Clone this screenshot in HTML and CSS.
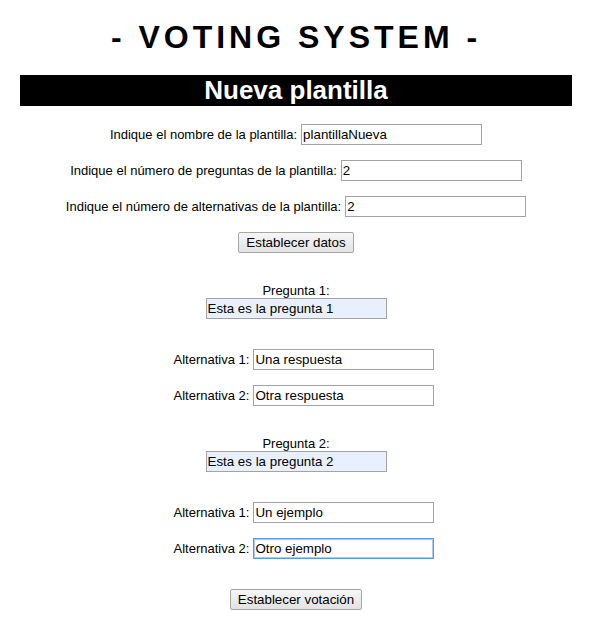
FILE: index.html
```html
<!DOCTYPE html>
<html lang="es">
<head>
<meta charset="utf-8">
<title>Voting System</title>
<link rel="stylesheet" href="styles.css">
</head>
<body>
<div class="page">
  <h1 class="title">- VOTING SYSTEM -</h1>
  <h2 class="bar">Nueva plantilla</h2>

  <form class="setup">
    <div class="row"><label>Indique el nombre de la plantilla:</label><input class="field" type="text" value="plantillaNueva"></div>
    <div class="row"><label>Indique el número de preguntas de la plantilla:</label><input class="field" type="text" value="2"></div>
    <div class="row"><label>Indique el número de alternativas de la plantilla:</label><input class="field" type="text" value="2"></div>
    <div class="row"><button type="button" class="btn">Establecer datos</button></div>
  </form>

  <div class="questions">
    <div class="question">
      <div class="q-head">
        <label>Pregunta 1:</label>
        <input class="field filled" type="text" value="Esta es la pregunta 1">
      </div>
      <div class="alts">
        <div class="row"><label>Alternativa 1:</label><input class="field" type="text" value="Una respuesta"></div>
        <div class="row"><label>Alternativa 2:</label><input class="field" type="text" value="Otra respuesta"></div>
      </div>
    </div>
    <div class="question">
      <div class="q-head">
        <label>Pregunta 2:</label>
        <input class="field filled" type="text" value="Esta es la pregunta 2">
      </div>
      <div class="alts">
        <div class="row"><label>Alternativa 1:</label><input class="field" type="text" value="Un ejemplo"></div>
        <div class="row"><label>Alternativa 2:</label><input class="field active" type="text" value="Otro ejemplo"></div>
      </div>
    </div>
    <div class="row"><button type="button" class="btn">Establecer votación</button></div>
  </div>
</div>
</body>
</html>
```

FILE: styles.css
```css
html, body {
  margin: 0;
  padding: 0;
  background: #fff;
}

body {
  font-family: "Liberation Sans", Arial, sans-serif;
  font-size: 13px;
  color: #000;
}

.page {
  width: 552px;
  margin-left: 20px;
  text-align: center;
}

.title {
  margin: 19px 0 0 0;
  font-size: 32px;
  line-height: 37px;
  font-weight: bold;
  letter-spacing: 4px;
}

.bar {
  margin: 19px 0 0 0;
  background: #000;
  color: #fff;
  font-size: 26px;
  line-height: 31px;
  height: 31px;
  font-weight: bold;
}

.setup {
  margin: 18px 0 0 0;
  display: flex;
  flex-direction: column;
  gap: 15px;
}

.row {
  display: flex;
  justify-content: center;
  align-items: center;
  gap: 4px;
  height: 21px;
}

.row label {
  line-height: 15px;
}

.field {
  box-sizing: border-box;
  width: 181px;
  height: 21px;
  margin: 0;
  padding: 0 1px;
  border: 1px solid #a3a3a3;
  background: #fff;
  font-family: "Liberation Sans", Arial, sans-serif;
  font-size: 13.33px;
  color: #000;
  outline: none;
}

.field.filled {
  background: #e8f0fe;
}

.field.active {
  border-color: #5b9be6;
  box-shadow: inset 0 0 0 1px #a8c8f0;
}

.btn {
  box-sizing: border-box;
  height: 21px;
  margin: 0;
  padding: 0 7px;
  border: 1px solid #a6a6a6;
  border-radius: 2px;
  background: linear-gradient(#f6f6f6, #e2e2e2);
  font-family: "Liberation Sans", Arial, sans-serif;
  font-size: 13.33px;
  color: #000;
}

.questions {
  margin-top: 30px;
  display: flex;
  flex-direction: column;
  gap: 30px;
}

.question {
  display: flex;
  flex-direction: column;
  gap: 30px;
}

.q-head {
  display: flex;
  flex-direction: column;
  align-items: center;
}

.q-head label {
  line-height: 15px;
}

.alts {
  display: flex;
  flex-direction: column;
  gap: 15px;
}

.alts .row {
  padding-left: 16px;
}
```
